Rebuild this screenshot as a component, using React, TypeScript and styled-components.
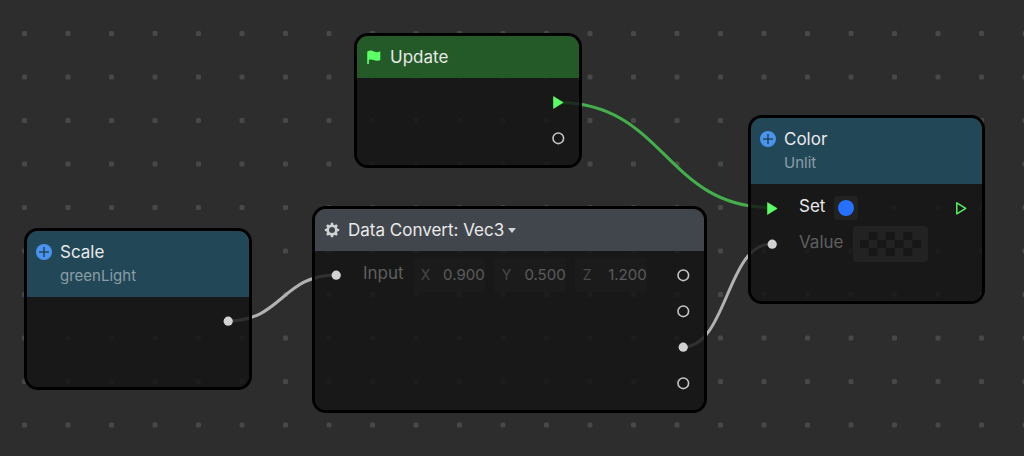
import React from "react";
import styled, { createGlobalStyle } from "styled-components";

const GlobalStyle = createGlobalStyle`
  * { box-sizing: border-box; }
  body { margin: 0; background: #2d2d2d; }
  button, input { font: inherit; color: inherit; margin: 0; padding: 0; border: 0; background: none; }
`;

const Canvas = styled.main`
  position: relative;
  min-height: 100vh;
  overflow: hidden;
  background: #2d2d2d;
  font-family: Inter, "Liberation Sans", sans-serif;
  font-size: 15px;
  line-height: 24px;
  color: #e9e9e9;
`;

const Backdrop = styled.svg`
  position: absolute;
  inset: 0;
  width: 100%;
  height: 100%;
`;

const Node = styled.article<{ $x: number; $y: number; $w: number; $h: number }>`
  position: absolute;
  left: ${(p) => p.$x}px;
  top: ${(p) => p.$y}px;
  width: ${(p) => p.$w}px;
  min-height: ${(p) => p.$h}px;
  display: flex;
  flex-direction: column;
  border: 3px solid #000;
  border-radius: 14px;
  overflow: hidden;
`;

const Header = styled.header<{ $color: string }>`
  display: flex;
  align-items: flex-start;
  gap: 7px;
  padding: 9px 8px;
  background: ${(p) => p.$color};
`;

const HeaderIcon = styled.svg`
  flex: none;
  width: 18px;
  height: 18px;
  margin-top: 3px;
`;

const Title = styled.h2`
  margin: 0;
  font-size: 17px;
  font-weight: 400;
  line-height: 24px;
`;

const Subtitle = styled.p`
  margin: 0;
  font-size: 15px;
  line-height: 24px;
  color: #8a9ea8;
`;

const TypeButton = styled.button`
  display: flex;
  align-items: center;
  gap: 4px;
`;

const Body = styled.div`
  flex: 1;
  display: flex;
  justify-content: space-between;
  padding: 6px 13px;
  background: rgba(19, 19, 19, 0.82);
`;

const PortColumn = styled.div`
  display: flex;
  flex-direction: column;
`;

const PortRow = styled.div`
  display: flex;
  align-items: center;
  gap: 9px;
  height: 36px;
`;

const PortIcon = styled.svg`
  flex: none;
  width: 16px;
  height: 16px;
`;

const PortLabel = styled.span<{ $dim?: boolean }>`
  padding: 0 0 4px 10px;
  font-size: 17px;
  color: ${(p) => (p.$dim ? "#5f5f5f" : "#e9e9e9")};
`;

const Fields = styled.div`
  display: flex;
  gap: 9px;
`;

const Field = styled.label`
  display: flex;
  align-items: center;
  justify-content: space-between;
  width: 72px;
  height: 34px;
  padding-left: 8px;
  border-radius: 2px;
  background: #1b1b1b;
  font-size: 14px;
  color: #484848;
`;

const FieldInput = styled.input`
  width: 48px;
  font-size: 15px;
  text-align: right;
  color: #5c5c5c;
`;

const ColorButton = styled.button`
  display: grid;
  place-items: center;
  width: 24px;
  height: 24px;
  border-radius: 3px;
  background: #222;
`;

const ColorDot = styled.span`
  width: 16px;
  height: 16px;
  border-radius: 50%;
  background: #2670ff;
`;

const AlphaButton = styled.button`
  display: grid;
  place-items: center;
  width: 75px;
  height: 36px;
  border-radius: 4px;
  background: #222;
`;

type PortKind = "open" | "linked" | "flow" | "flowOpen";

function Port({ kind }: { kind: PortKind }) {
  return (
    <PortIcon viewBox="0 0 16 16" aria-hidden="true">
      {kind === "open" && <circle cx="8.300" cy="8.300" r="5.3" fill="none" stroke="#c4c4c4" strokeWidth="1.6" />}
      {kind === "linked" && <circle cx="8.200" cy="8.200" r="4.6" fill="#d2d2d2" />}
      {kind === "flow" && <path d="M3.500 2.500 13.200 8.500 3.500 14.500Z" fill="#5bff66" stroke="#5bff66" strokeLinejoin="round" strokeWidth="0.6" />}
      {kind === "flowOpen" && <path d="M3.800 2.800 12.700 8.300 3.800 13.800Z" fill="none" stroke="#56f060" strokeLinejoin="round" strokeWidth="1.5" />}
    </PortIcon>
  );
}

function PlusIcon() {
  return (
    <HeaderIcon viewBox="0 0 18 18" aria-hidden="true">
      <circle cx="9" cy="9" r="8" fill="#4a94f0" />
      <path d="M9 4.5v9M4.5 9h9" stroke="#214757" strokeWidth="1.5" strokeLinecap="round" />
    </HeaderIcon>
  );
}

function FlagIcon() {
  return (
    <HeaderIcon viewBox="0 0 18 18" aria-hidden="true">
      <path d="M2.2 3.700C4.600 2.100 7 2.400 9 3.500c2 1 4 .9 6.300-.2v8.600c-2.400 1.300-4.700 1.200-6.700.2-1.800-.8-3.300-.9-4.700-.2v4.100H2.200Z" fill="#5bff66" />
    </HeaderIcon>
  );
}

function GearIcon() {
  const teeth = [0, 45, 90, 135, 180, 225, 270, 315];
  return (
    <HeaderIcon viewBox="0 0 18 18" aria-hidden="true">
      <circle cx="9" cy="9" r="4.3" fill="none" stroke="#d0d2d4" strokeWidth="2.6" />
      {teeth.map((a) => (
        <path key={a} d="M7.4 4.4 7.900 1.800h2.200l.5 2.600Z" fill="#d0d2d4" transform={`rotate(${a} 9 9)`} />
      ))}
    </HeaderIcon>
  );
}

const axes = [
  { axis: "X", value: "0.900" },
  { axis: "Y", value: "0.500" },
  { axis: "Z", value: "1.200" },
];

const dots = [0, 43.5];
const checks = [[1, 0], [3, 0], [5, 0], [0, 1], [2, 1], [4, 1], [6, 1], [1, 2], [3, 2], [5, 2]];

export default function App() {
  return (
    <Canvas>
      <GlobalStyle />
      <Backdrop aria-hidden="true">
        <defs>
          <pattern id="dots" x="22" y="31" width="87" height="87" patternUnits="userSpaceOnUse">
            {dots.map((x) => dots.map((y) => (
              <rect key={`${x}-${y}`} x={x} y={y} width="5" height="5" rx="1.5" fill="#484848" />
            )))}
          </pattern>
        </defs>
        <rect width="100%" height="100%" fill="url(#dots)" />
        <g fill="none" strokeWidth="3">
          <path d="M558 102.500C665 102.500 665 207.500 771 207.500" stroke="#43b04b" />
          <path d="M228 321C282 321 282 275 336 275" stroke="#b2b2b2" />
          <path d="M683 347C727 347 727 244 771 244" stroke="#b2b2b2" />
        </g>
      </Backdrop>

      <Node $x={354} $y={33} $w={228} $h={135}>
        <Header $color="#235a27">
          <FlagIcon />
          <Title>Update</Title>
        </Header>
        <Body>
          <PortColumn />
          <PortColumn>
            <PortRow><Port kind="flow" /></PortRow>
            <PortRow><Port kind="open" /></PortRow>
          </PortColumn>
        </Body>
      </Node>

      <Node $x={24} $y={228} $w={228} $h={162}>
        <Header $color="#224757">
          <PlusIcon />
          <div>
            <Title>Scale</Title>
            <Subtitle>greenLight</Subtitle>
          </div>
        </Header>
        <Body>
          <PortColumn />
          <PortColumn>
            <PortRow><Port kind="linked" /></PortRow>
          </PortColumn>
        </Body>
      </Node>

      <Node $x={312} $y={206} $w={395} $h={207}>
        <Header $color="#41464d">
          <GearIcon />
          <Title>
            <TypeButton type="button" aria-haspopup="listbox">
              Data Convert: Vec3
              <svg width="8" height="6" viewBox="0 0 8 6" aria-hidden="true">
                <path d="M0 1h8L4 6Z" fill="#d0d2d4" />
              </svg>
            </TypeButton>
          </Title>
        </Header>
        <Body>
          <PortColumn>
            <PortRow>
              <Port kind="linked" />
              <PortLabel $dim>Input</PortLabel>
              <Fields>
                {axes.map((a) => (
                  <Field key={a.axis}>
                    {a.axis}
                    <FieldInput defaultValue={a.value} />
                  </Field>
                ))}
              </Fields>
            </PortRow>
          </PortColumn>
          <PortColumn>
            <PortRow><Port kind="open" /></PortRow>
            <PortRow><Port kind="open" /></PortRow>
            <PortRow><Port kind="linked" /></PortRow>
            <PortRow><Port kind="open" /></PortRow>
          </PortColumn>
        </Body>
      </Node>

      <Node $x={748} $y={115} $w={237} $h={189}>
        <Header $color="#224757">
          <PlusIcon />
          <div>
            <Title>Color</Title>
            <Subtitle>Unlit</Subtitle>
          </div>
        </Header>
        <Body>
          <PortColumn>
            <PortRow>
              <Port kind="flow" />
              <PortLabel>Set</PortLabel>
              <ColorButton type="button" aria-label="Node color">
                <ColorDot />
              </ColorButton>
            </PortRow>
            <PortRow>
              <Port kind="linked" />
              <PortLabel $dim>Value</PortLabel>
              <AlphaButton type="button" aria-label="Pick value">
                <svg width="61" height="24" viewBox="0 0 7 3" preserveAspectRatio="none" aria-hidden="true">
                  {checks.map(([x, y]) => (
                    <rect key={`${x}-${y}`} x={x} y={y} width="1" height="1" fill="#171717" />
                  ))}
                </svg>
              </AlphaButton>
            </PortRow>
          </PortColumn>
          <PortColumn>
            <PortRow><Port kind="flowOpen" /></PortRow>
          </PortColumn>
        </Body>
      </Node>
    </Canvas>
  );
}
